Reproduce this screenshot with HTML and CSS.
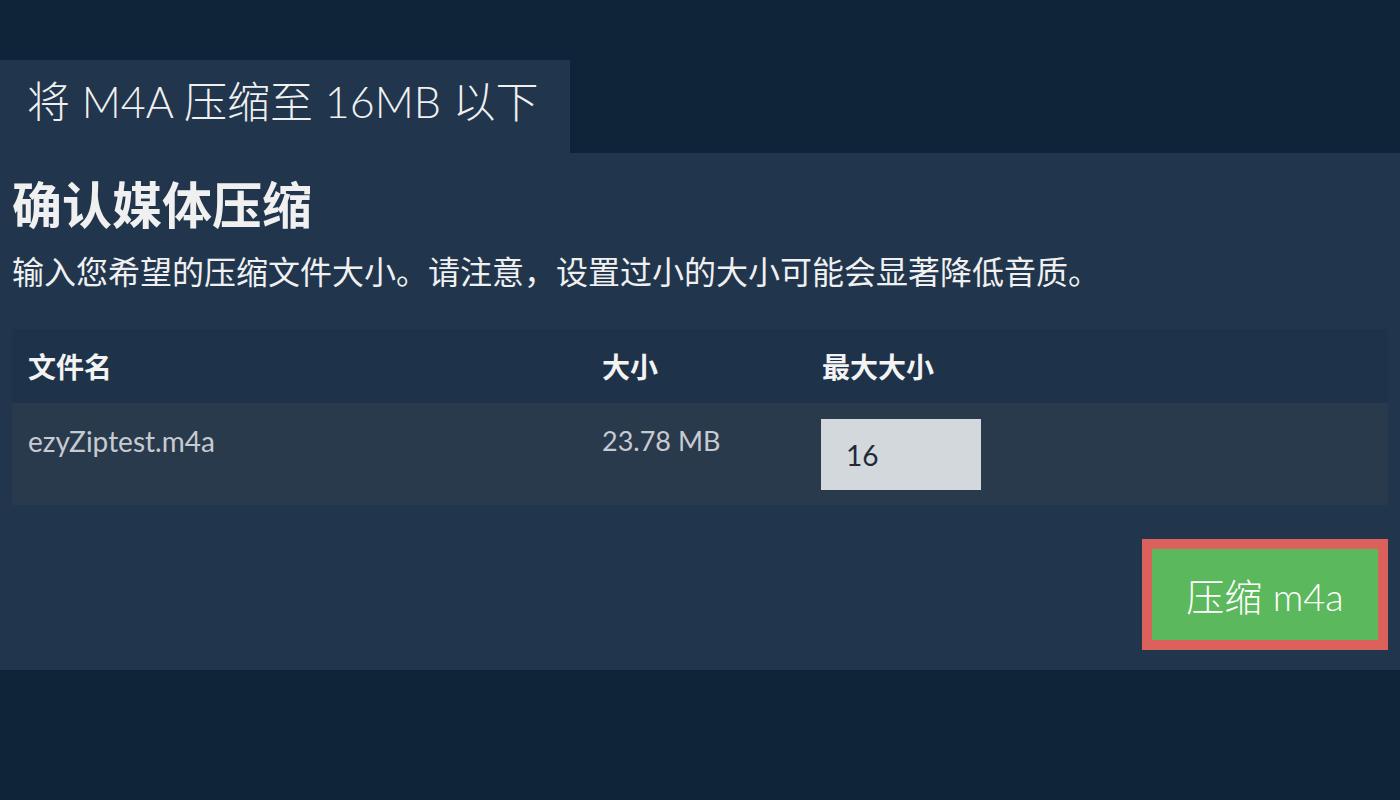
FILE: index.html
```html
<!DOCTYPE html>
<html lang="zh-CN">
<head>
<meta charset="utf-8">
<title>将 M4A 压缩至 16MB 以下</title>
<link rel="stylesheet" href="styles.css">
</head>
<body>
<div class="page">
  <div class="tab">将 M4A 压缩至 16MB 以下</div>
  <section class="panel">
    <h2 class="title">确认媒体压缩</h2>
    <p class="desc">输入您希望的压缩文件大小。请注意，设置过小的大小可能会显著降低音质。</p>
    <table class="files">
      <thead>
        <tr>
          <th class="c-name">文件名</th>
          <th class="c-size">大小</th>
          <th class="c-max">最大大小</th>
        </tr>
      </thead>
      <tbody>
        <tr>
          <td>ezyZiptest.m4a</td>
          <td>23.78 MB</td>
          <td><input class="max-input" type="text" value="16"></td>
        </tr>
      </tbody>
    </table>
    <div class="actions">
      <button class="compress">压缩 m4a</button>
    </div>
  </section>
</div>
</body>
</html>
```

FILE: styles.css
```css
html, body {
  margin: 0;
  padding: 0;
  background: #0f2339;
  font-family: "Lato", "Noto Sans CJK SC", sans-serif;
  color: #eef0f2;
}

.page {
  padding-top: 60px;
  width: 1400px;
}

.tab {
  width: 570px;
  height: 93px;
  box-sizing: border-box;
  background: #21364d;
  padding: 14px 0 0 27px;
  font-size: 43px;
  font-weight: 300;
  line-height: 56px;
  color: #f0f0f0;
}

.panel {
  background: #21364d;
  padding: 20px 12px 20px 12px;
}

.title {
  margin: 0;
  font-size: 50px;
  font-weight: 700;
  line-height: 64px;
  color: #f0f0f0;
}

.desc {
  margin: 14px 0 0 0;
  font-size: 32px;
  line-height: 42px;
  color: #f0f0f0;
}

.files {
  margin-top: 36px;
  width: 100%;
  border-collapse: collapse;
}

.files th {
  background: #1e3349;
  text-align: left;
  font-size: 28px;
  font-weight: 700;
  height: 74px;
  padding: 0 16px;
  box-sizing: border-box;
  color: #f3f3f3;
}

.c-name { width: 574px; }
.c-size { width: 220px; }

.files td {
  background: #2a3a4d;
  vertical-align: top;
  padding: 16px 16px 15px 16px;
  font-size: 28px;
  line-height: 44px;
  color: #c6cbd1;
  height: 102px;
  box-sizing: border-box;
}

.files td:nth-child(2) {
  font-size: 27px;
}

.files td:nth-child(3) {
  padding-left: 15px;
}

.max-input {
  width: 160px;
  height: 71px;
  box-sizing: border-box;
  border: none;
  background: #d3d8dd;
  padding: 0 0 0 25px;
  font-family: "Lato", sans-serif;
  font-size: 28px;
  color: #1e2a38;
  outline: none;
  display: block;
}

.actions {
  display: flex;
  justify-content: flex-end;
  margin-top: 34px;
}

.compress {
  width: 246px;
  height: 111px;
  box-sizing: border-box;
  border: 10px solid #dc605c;
  background: #5cb85c;
  color: #ffffff;
  font-family: "Lato", "Noto Sans CJK SC", sans-serif;
  font-size: 38px;
  font-weight: 300;
  padding: 0;
  cursor: pointer;
}
```
